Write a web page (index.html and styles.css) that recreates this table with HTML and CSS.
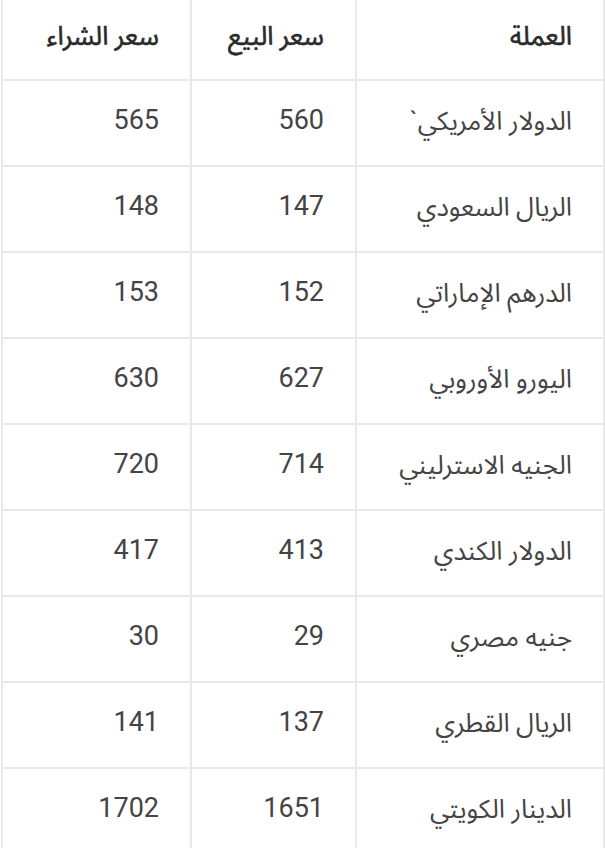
FILE: index.html
```html
<!DOCTYPE html>
<html lang="ar" dir="rtl">
<head>
<meta charset="utf-8">
<link rel="stylesheet" href="styles.css">
</head>
<body>
<div class="rates">
  <div class="cell head">العملة</div>
  <div class="cell head">سعر البيع</div>
  <div class="cell head">سعر الشراء</div>

  <div class="cell">الدولار الأمريكي`</div>
  <div class="cell num">560</div>
  <div class="cell num">565</div>

  <div class="cell">الريال السعودي</div>
  <div class="cell num">147</div>
  <div class="cell num">148</div>

  <div class="cell">الدرهم الإماراتي</div>
  <div class="cell num">152</div>
  <div class="cell num">153</div>

  <div class="cell">اليورو الأوروبي</div>
  <div class="cell num">627</div>
  <div class="cell num">630</div>

  <div class="cell">الجنيه الاسترليني</div>
  <div class="cell num">714</div>
  <div class="cell num">720</div>

  <div class="cell">الدولار الكندي</div>
  <div class="cell num">413</div>
  <div class="cell num">417</div>

  <div class="cell">جنيه مصري</div>
  <div class="cell num">29</div>
  <div class="cell num">30</div>

  <div class="cell">الريال القطري</div>
  <div class="cell num">137</div>
  <div class="cell num">141</div>

  <div class="cell">الدينار الكويتي</div>
  <div class="cell num">1651</div>
  <div class="cell num">1702</div>
</div>
</body>
</html>
```
FILE: styles.css
```css
html, body {
  margin: 0;
  padding: 0;
  background: #ffffff;
}

body {
  direction: rtl;
  font-family: Roboto, "Noto Sans Arabic", "Noto Naskh Arabic", "DejaVu Sans", sans-serif;
  color: #444444;
}

.rates {
  display: grid;
  grid-template-columns: 246px 163px 187px;
  grid-auto-rows: 84px;
  gap: 2px;
  padding: 2px;
  width: 600px;
  margin-top: -7px;
  background: #e9e9e9;
}

.cell {
  background: #ffffff;
  display: flex;
  align-items: center;
  padding-right: 31px;
  padding-bottom: 5px;
  font-size: 26px;
  line-height: 1;
  white-space: nowrap;
}

.num {
  font-size: 27px;
}

.head {
  font-weight: 400;
  color: #2a2a2a;
  -webkit-text-stroke: 0.6px #2a2a2a;
  padding-bottom: 3px;
}
```
